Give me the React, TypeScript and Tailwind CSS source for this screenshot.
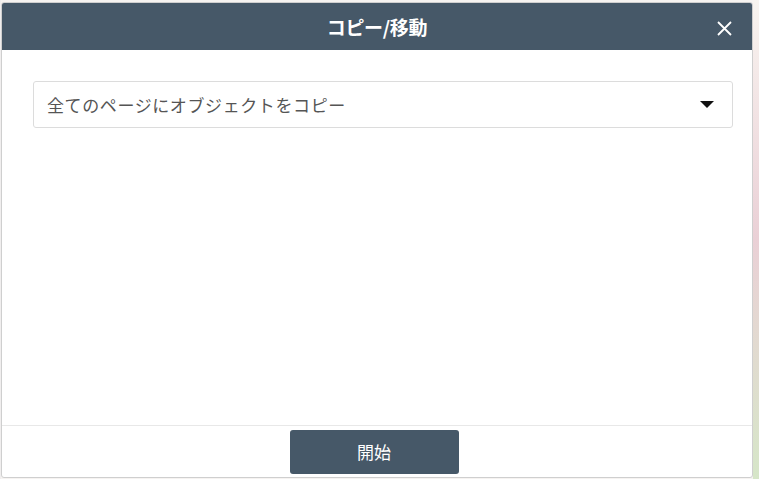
import React from "react";

export default function App() {
  const font = { fontFamily: '"Noto Sans CJK JP", "Noto Sans", sans-serif' };
  return (
    <div className="w-[759px] h-[479px] flex bg-[#f6f3f1] overflow-hidden" style={font}>
      <div className="w-[1px] shrink-0 bg-[#f0eeee]" />
      <div className="mt-[2px] w-[752px] h-[476px] shrink-0 flex flex-col bg-white border border-[#cfcfcf] rounded-[3px] overflow-hidden">
        <div className="h-[47px] shrink-0 bg-[#465868] flex items-center justify-center relative">
          <span className="text-white text-[19px] font-bold leading-none tracking-[-0.3px]">コピー/移動</span>
          <svg className="absolute right-[20px] top-[18px]" width="15" height="15" viewBox="0 0 15 15">
            <path d="M1 1 L14 14 M14 1 L1 14" stroke="white" strokeWidth="1.8" fill="none" />
          </svg>
        </div>
        <div className="flex-1 pl-[31px] pr-[19px] pt-[31px]">
          <div className="h-[47px] border border-[#dcdcdc] rounded-[3px] flex items-center justify-between pl-[13px] pr-[18px]">
            <span className="text-[#555555] text-[17px] tracking-[0.6px]">全てのページにオブジェクトをコピー</span>
            <svg width="14" height="8" viewBox="0 0 14 8">
              <path d="M0 0 L14 0 L7 7 Z" fill="#111" />
            </svg>
          </div>
        </div>
        <div className="h-[52px] shrink-0 border-t border-[#e8e8e8] flex justify-center pt-[4px] pr-[6px]">
          <button className="w-[169px] h-[44px] bg-[#465868] rounded-[3px] text-white text-[17px] flex items-center justify-center">
            開始
          </button>
        </div>
      </div>
      <div className="flex-1 bg-gradient-to-b from-[#f8f4f0] via-[#ead0d6] to-[#d6e6c8]" />
    </div>
  );
}
